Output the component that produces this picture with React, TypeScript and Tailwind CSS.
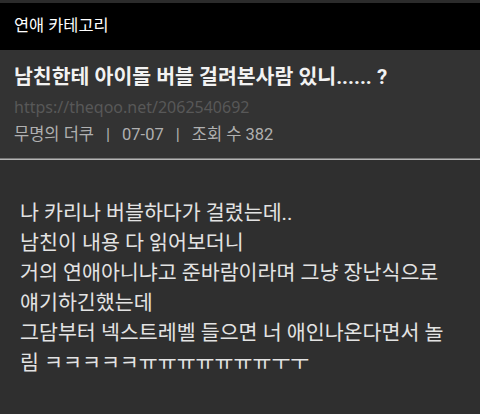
import React from 'react';

const lines = [
  '나 카리나 버블하다가 걸렸는데..',
  '남친이 내용 다 읽어보더니',
  '거의 연애아니냐고 준바람이라며 그냥 장난식으로',
  '얘기하긴했는데',
  '그담부터 넥스트레벨 들으면 너 애인나온다면서 놀',
  '림 ㅋㅋㅋㅋㅋㅠㅠㅠㅠㅠㅠㅠㅜㅜ',
];

const App: React.FC = () => {
  return (
    <div
      className="w-[480px] h-[414px] overflow-hidden bg-[#2f2f2f]"
      style={{ fontFamily: 'Roboto, "Noto Sans CJK KR", sans-serif' }}
    >
      <div className="h-[3px] bg-[#2b2b2b]" />
      <header className="h-[47px] bg-black flex items-center px-[14px]">
        <span className="text-[16.4px] text-white">연애 카테고리</span>
      </header>
      <section className="bg-[#333333] px-[14px] pt-[14px] h-[108px]">
        <h1 className="text-[20.5px] font-bold text-[#f2f2f2] leading-[26px] whitespace-nowrap">
          남친한테 아이돌 버블 걸려본사람 있니...... ?
        </h1>
        <div
          className="text-[16px] text-[#585858] leading-[28px] mt-[3px]"
          style={{ fontFamily: '"Noto Sans", sans-serif' }}
        >
          https://theqoo.net/2062540692
        </div>
        <div className="text-[16.5px] text-[#b0b0b0] leading-[28px] flex gap-[12px]">
          <span>무명의 더쿠</span>
          <span>|</span>
          <span>07-07</span>
          <span>|</span>
          <span>조회 수 382</span>
        </div>
      </section>
      <div className="h-px bg-[#777]" />
      <div className="h-px bg-[#b5b5b5]" />
      <article className="px-[20px] pt-[38px] text-[20.6px] leading-[30px] text-[#e3e3e3] whitespace-nowrap">
        {lines.map((l, i) => (
          <p key={i}>{l}</p>
        ))}
      </article>
    </div>
  );
};

export default App;
